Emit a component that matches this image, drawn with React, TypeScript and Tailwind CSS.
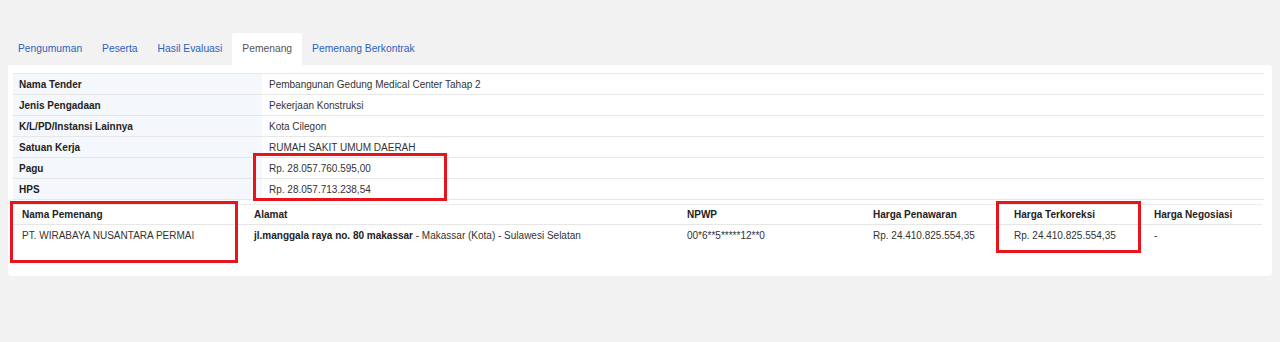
const tabs = ['Pengumuman', 'Peserta', 'Hasil Evaluasi', 'Pemenang', 'Pemenang Berkontrak']

const info: [string, string][] = [
  ['Nama Tender', 'Pembangunan Gedung Medical Center Tahap 2'],
  ['Jenis Pengadaan', 'Pekerjaan Konstruksi'],
  ['K/L/PD/Instansi Lainnya', 'Kota Cilegon'],
  ['Satuan Kerja', 'RUMAH SAKIT UMUM DAERAH'],
  ['Pagu', 'Rp. 28.057.760.595,00'],
  ['HPS', 'Rp. 28.057.713.238,54'],
]

export default function App() {
  return (
    <div
      className="relative h-[342px] w-[1280px] bg-[#f2f2f2] text-[10px] text-[#333]"
      style={{ fontFamily: '"Liberation Sans", Arial, sans-serif' }}
    >
      <div className="px-[8px] pt-[33px]">
        {/* tabs */}
        <div className="flex h-[32px] items-stretch text-[10.3px]">
          {tabs.map((t) => (
            <div
              key={t}
              className={
                t === 'Pemenang'
                  ? 'flex items-center rounded-t-[3px] bg-white px-[10px] text-[#555]'
                  : 'flex items-center px-[10px] text-[#2f5fbf]'
              }
            >
              {t}
            </div>
          ))}
        </div>

        {/* card */}
        <div className="h-[211px] w-[1264px] rounded-b-[4px] rounded-tr-[4px] bg-white px-[5px] pt-[8px]">
          <table className="w-[1251px] border-collapse">
            <tbody>
              {info.map(([k, v]) => (
                <tr key={k} className="h-[21px] border-y border-[#e7e7e7]">
                  <td className="w-[249px] bg-[#f4f8fc] px-[6px] font-bold text-[#222]">{k}</td>
                  <td className="px-[7px]">{v}</td>
                </tr>
              ))}
            </tbody>
          </table>

          <table className="mt-[4px] w-[1249px] border-collapse border-t border-[#ececec]">
            <thead>
              <tr className="h-[20px] border-b border-[#e7e7e7] text-left font-bold text-[#222]">
                <th className="w-[232px] pl-[9px]">Nama Pemenang</th>
                <th className="w-[433px] pl-[9px]">Alamat</th>
                <th className="w-[186px] pl-[9px]">NPWP</th>
                <th className="w-[141px] pl-[9px]">Harga Penawaran</th>
                <th className="w-[140px] pl-[9px]">Harga Terkoreksi</th>
                <th className="pl-[9px]">Harga Negosiasi</th>
              </tr>
            </thead>
            <tbody>
              <tr className="h-[22px]">
                <td className="pl-[9px]">PT. WIRABAYA NUSANTARA PERMAI</td>
                <td className="pl-[9px]">
                  <span className="font-bold text-[#222]">jl.manggala raya no. 80 makassar</span> - Makassar (Kota) - Sulawesi Selatan
                </td>
                <td className="pl-[9px]">00*6**5*****12**0</td>
                <td className="pl-[9px]">Rp. 24.410.825.554,35</td>
                <td className="pl-[9px]">Rp. 24.410.825.554,35</td>
                <td className="pl-[9px]">-</td>
              </tr>
            </tbody>
          </table>
        </div>
      </div>

      {/* red highlight boxes */}
      <div className="absolute left-[253px] top-[153px] h-[48px] w-[194px] border-[3px] border-[#e8141b]" />
      <div className="absolute left-[10px] top-[201px] h-[62px] w-[228px] border-[3px] border-[#e8141b]" />
      <div className="absolute left-[996px] top-[201px] h-[52px] w-[145px] border-[3px] border-[#e8141b]" />
    </div>
  )
}
